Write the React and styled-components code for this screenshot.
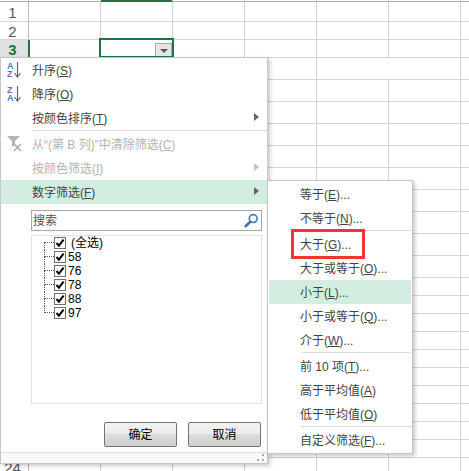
import React from 'react';
import styled, { createGlobalStyle } from 'styled-components';

const GlobalStyle = createGlobalStyle`
  html, body {
    margin: 0;
    padding: 0;
    width: 469px;
    height: 471px;
    overflow: hidden;
    background: #fff;
  }
  * { box-sizing: border-box; }
`;

const FONT = `"Liberation Sans", "Noto Sans CJK SC", sans-serif`;
const GREEN = '#217346';
const HOVER = '#d3eee0';

const Page = styled.div`
  position: relative;
  width: 469px;
  height: 471px;
  overflow: hidden;
  font-family: ${FONT};
  font-size: 12px;
  color: #444;
`;

/* ---- sheet behind the menus ---- */

const Sheet = styled.div`
  display: grid;
  grid-template-columns: 29px repeat(6, 72px) 8px;
  grid-auto-rows: min-content;
`;

const Cell = styled.div`
  position: relative;
  height: ${p => p.$h}px;
  border-right: ${p => (p.$open ? 'none' : '1px solid #d4d4d4')};
  border-bottom: 1px solid #d4d4d4;
`;

const HeadCell = styled(Cell)`
  display: flex;
  align-items: center;
  justify-content: center;
  padding: 1px 3px 0 0;
  font-size: 15px;
  color: ${p => (p.$active ? GREEN : '#555')};
  font-weight: ${p => (p.$active ? 700 : 400)};
  background: ${p => (p.$active ? '#e1e1e1' : '#fff')};
  border-right: ${p => (p.$active ? `2px solid ${GREEN}` : '1px solid #b8b8b8')};
  width: ${p => (p.$active ? 30 : 29)}px;
`;

const StripCell = styled(Cell)`
  border-bottom-color: ${p => (p.$active ? GREEN : '#ababab')};
  background: ${p => (p.$active ? GREEN : 'transparent')};
`;

const ActiveOutline = styled.div`
  position: absolute;
  left: 99px;
  top: 38px;
  width: 75px;
  height: 20px;
  border: 2px solid ${GREEN};
`;

const FilterButton = styled.div`
  position: absolute;
  right: 0;
  bottom: 0;
  width: 17px;
  height: 15px;
  margin: 0 0 -1px 0;
  display: flex;
  align-items: center;
  justify-content: center;
  background: #e6e6e6;
  border: 1px solid #a9a9b4;

  &::after {
    content: '';
    border-left: 4px solid transparent;
    border-right: 4px solid transparent;
    border-top: 4px solid #5a5a5a;
  }
`;

/* ---- menus ---- */

const Panel = styled.div`
  position: absolute;
  background: #fff;
  border: 1px solid #c6c6c6;
  box-shadow: 2px 2px 4px rgba(0, 0, 0, 0.22);
`;

const FilterPanel = styled(Panel)`
  left: 0;
  top: 57px;
  width: 268px;
  height: 407px;
  display: flex;
  flex-direction: column;
`;

const SubPanel = styled(Panel)`
  left: 267px;
  top: 180px;
  width: 146px;
  height: 274px;
  padding-top: 1px;
`;

const Item = styled.div`
  position: relative;
  flex: none;
  height: 24px;
  display: flex;
  align-items: center;
  padding: 0 0 2px 31px;
  color: ${p => (p.$off ? '#b4b4b4' : '#444')};
  background: ${p => (p.$on ? HOVER : 'transparent')};
  white-space: pre;
`;

const SubItem = styled(Item)`
  margin: 0 1px;
`;

const Key = styled.span`
  text-decoration: underline;
  text-underline-offset: 1px;
`;

const Sep = styled.div`
  flex: none;
  height: 2px;
  margin: 0 ${p => (p.$sub ? 1 : 0)}px 0 ${p => (p.$sub ? 33 : 32)}px;
  border-top: 1px solid #dcdcdc;
`;

const Caret = styled.span`
  margin-left: auto;
  margin-right: 8px;
  border-top: 4px solid transparent;
  border-bottom: 4px solid transparent;
  border-left: 5px solid ${p => (p.$off ? '#c4c4c4' : '#666')};
`;

const IconSlot = styled.svg`
  position: absolute;
  left: 5px;
  top: 3px;
`;

const SearchRow = styled.div`
  flex: none;
  height: 21px;
  margin: 6px 5px 0 30px;
  display: flex;
  align-items: center;
  justify-content: space-between;
  padding: 0 2px 0 1px;
  border: 1px solid #a8a8a8;
  color: #555;

  & > span {
    margin-bottom: 2px;
  }
`;

const TreeBox = styled.div`
  flex: none;
  height: 169px;
  margin: 4px 5px 0 30px;
  padding-left: 12px;
  border: 1px solid #e2e2e2;
`;

const TreeRow = styled.div`
  display: flex;
  align-items: center;
  height: 14px;
  color: #000;
`;

const Connector = styled.div`
  flex: none;
  width: 10px;
  height: 14px;
`;

const ConnectorTop = styled.div`
  height: 7px;
  border-left: ${p => (p.$hide ? 'none' : '1px dotted #555')};
  border-bottom: 1px dotted #555;
`;

const ConnectorBottom = styled.div`
  height: 7px;
  border-left: ${p => (p.$hide ? 'none' : '1px dotted #555')};
`;

const Check = styled.div`
  flex: none;
  width: 12px;
  height: 12px;
  display: flex;
  align-items: center;
  justify-content: center;
  background: #fff;
  border: 1px solid #6f6f6f;
`;

const TreeLabel = styled.span`
  margin-left: ${p => p.$gap}px;
  line-height: 14px;
`;

const ButtonRow = styled.div`
  flex: none;
  display: flex;
  justify-content: flex-end;
  gap: 11px;
  margin: 18px 6px 0 0;
`;

const Button = styled.div`
  width: 73px;
  height: 25px;
  display: flex;
  align-items: center;
  justify-content: center;
  padding-bottom: 2px;
  color: #000;
  border: 1px solid #737373;
  border-radius: 2px;
  background: linear-gradient(#f3f3f3 0, #ebebeb 48%, #dcdcdc 50%, #cfcfcf 100%);
`;

const Footer = styled.div`
  flex: 1;
  margin-top: 5px;
  display: flex;
  justify-content: flex-end;
  align-items: flex-end;
  padding: 0 2px 1px 0;
  background: #f8f8f8;
  border-top: 1px solid #d9e4ea;
`;

const Callout = styled.div`
  position: absolute;
  left: 291px;
  top: 229px;
  width: 74px;
  height: 30px;
  border: 3px solid #f53535;
`;

/* ---- drawings ---- */

const SortIcon = ({ top, bottom, topColor, bottomColor }) => (
  <IconSlot width="18" height="18" viewBox="0 0 18 18">
    <text x="1" y="8" fontFamily="Liberation Sans" fontWeight="700" fontSize="9" fill={topColor}>{top}</text>
    <text x="1" y="16" fontFamily="Liberation Sans" fontWeight="700" fontSize="9" fill={bottomColor}>{bottom}</text>
    <path d="M11.5 1v14M8.5 12l3 4 3-4" fill="none" stroke="#666" strokeWidth="1.2" />
  </IconSlot>
);

const ClearFilterIcon = () => (
  <IconSlot width="18" height="18" viewBox="0 0 18 18">
    <path d="M1 1h13l-5 5v4l-3 2V6z" fill="#b5b5b5" />
    <path d="M8 9l7 7M15 9l-7 7" stroke="#a8a8a8" strokeWidth="1.4" />
  </IconSlot>
);

const SearchIcon = () => (
  <svg width="15" height="15" viewBox="0 0 15 15">
    <circle cx="9.2" cy="5.6" r="3.9" fill="#fff" stroke="#4a7fb5" strokeWidth="1.7" />
    <path d="M6 9L1.6 13.2" stroke="#3f74ab" strokeWidth="2.6" strokeLinecap="round" />
  </svg>
);

const CheckMark = () => (
  <svg width="10" height="10" viewBox="0 0 10 10">
    <path d="M1.5 5l2.4 2.6L8.6 1.6" fill="none" stroke="#000" strokeWidth="2" />
  </svg>
);

const Grip = () => (
  <svg width="8" height="8" viewBox="0 0 8 8">
    <path d="M5 0h2v2H5zM0 5h2v2H0zM5 5h2v2H5z" fill="#a9a9a9" />
  </svg>
);

/* ---- data ---- */

const ROW_HEIGHTS = [
  20, 18, 18,
  ...Array(10).fill(22),
  ...Array(10).fill(18),
  18,
];
const COLS = [1, 2, 3, 4, 5, 6];
const VALUES = ['58', '76', '78', '88', '97'];

const SUB_ITEMS = [
  ['等于(', 'E', ')...'],
  ['不等于(', 'N', ')...'],
  null,
  ['大于(', 'G', ')...'],
  ['大于或等于(', 'O', ')...'],
  ['小于(', 'L', ')...', true],
  ['小于或等于(', 'Q', ')...'],
  ['介于(', 'W', ')...'],
  null,
  ['前 10 项(', 'T', ')...'],
  ['高于平均值(', 'A', ')'],
  ['低于平均值(', 'O', ')'],
  null,
  ['自定义筛选(', 'F', ')...'],
];

const Label = ({ text, k, end = ')' }) => (
  <span>{text}<Key>{k}</Key>{end}</span>
);

export default function App() {
  return (
    <Page>
      <GlobalStyle />
      <Sheet>
        <StripCell $h={2} />
        {COLS.map(c => <StripCell key={c} $h={2} $active={c === 2} />)}
        <StripCell $h={2} $open />
        {ROW_HEIGHTS.map((h, r) => (
          <React.Fragment key={r}>
            <HeadCell $h={h} $active={r === 2}>{r + 1}</HeadCell>
            {COLS.map(c => (
              <Cell key={c} $h={h} $open={r === 3 && c === 5}>
                {r === 2 && c === 2 && <FilterButton />}
              </Cell>
            ))}
            <Cell $h={h} $open />
          </React.Fragment>
        ))}
      </Sheet>
      <ActiveOutline />

      <FilterPanel>
        <Item>
          <SortIcon top="A" bottom="Z" topColor="#4a7ebb" bottomColor="#8a5fb5" />
          <Label text="升序(" k="S" />
        </Item>
        <Item>
          <SortIcon top="Z" bottom="A" topColor="#8a5fb5" bottomColor="#4a7ebb" />
          <Label text="降序(" k="O" />
        </Item>
        <Item>
          <Label text="按颜色排序(" k="T" />
          <Caret />
        </Item>
        <Sep />
        <Item $off>
          <ClearFilterIcon />
          <Label text="从“(第 B 列)”中清除筛选(" k="C" />
        </Item>
        <Item $off>
          <Label text="按颜色筛选(" k="I" />
          <Caret $off />
        </Item>
        <Item $on>
          <Label text="数字筛选(" k="F" />
          <Caret />
        </Item>
        <SearchRow>
          <span>搜索</span>
          <SearchIcon />
        </SearchRow>
        <TreeBox>
          <TreeRow>
            <Connector>
              <ConnectorTop $hide />
              <ConnectorBottom />
            </Connector>
            <Check><CheckMark /></Check>
            <TreeLabel $gap={5}>(全选)</TreeLabel>
          </TreeRow>
          {VALUES.map((v, i) => (
            <TreeRow key={v}>
              <Connector>
                <ConnectorTop />
                <ConnectorBottom $hide={i === VALUES.length - 1} />
              </Connector>
              <Check><CheckMark /></Check>
              <TreeLabel $gap={2}>{v}</TreeLabel>
            </TreeRow>
          ))}
        </TreeBox>
        <ButtonRow>
          <Button>确定</Button>
          <Button>取消</Button>
        </ButtonRow>
        <Footer>
          <Grip />
        </Footer>
      </FilterPanel>

      <SubPanel>
        {SUB_ITEMS.map((it, i) =>
          it ? (
            <SubItem key={i} $on={it[3]}>
              <Label text={it[0]} k={it[1]} end={it[2]} />
            </SubItem>
          ) : (
            <Sep key={i} $sub />
          )
        )}
      </SubPanel>

      <Callout />
    </Page>
  );
}
